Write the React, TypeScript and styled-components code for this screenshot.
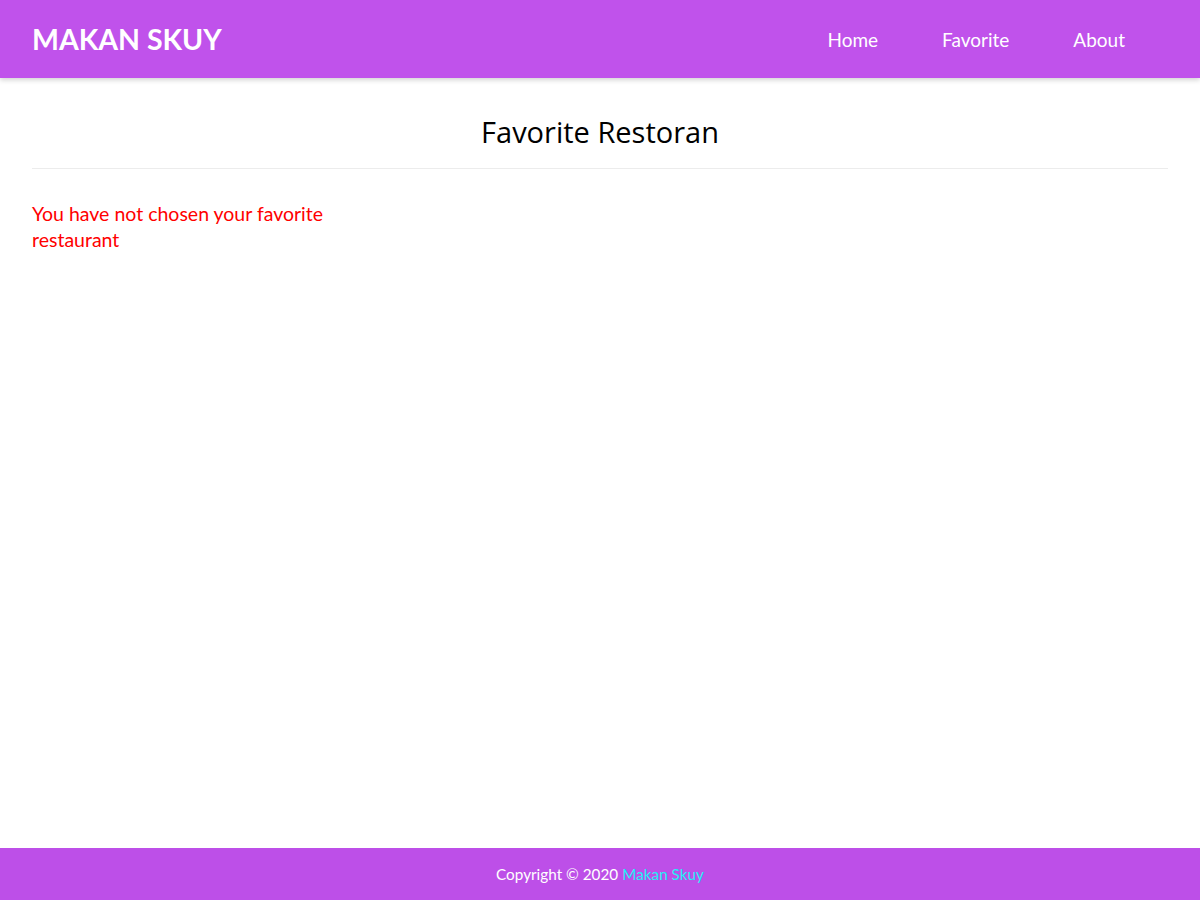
import React from "react";
import styled, { createGlobalStyle } from "styled-components";

const Global = createGlobalStyle`
  * { box-sizing: border-box; }
  html, body { margin: 0; padding: 0; }
  body { font-family: Lato, "Liberation Sans", sans-serif; background: #fff; color: #000; }
`;

const Page = styled.div`
  min-height: 900px;
  display: flex;
  flex-direction: column;
`;

const Header = styled.header`
  height: 78px;
  background: #c052eb;
  display: flex;
  align-items: center;
  justify-content: space-between;
  padding: 0 43px 0 32px;
  box-shadow: 0 2px 5px rgba(0, 0, 0, 0.18);
  position: relative;
  z-index: 1;
`;

const Logo = styled.a`
  color: #fff;
  font-family: Lato, sans-serif;
  font-weight: 700;
  font-size: 28.5px;
  text-decoration: none;
`;

const Nav = styled.nav`
  display: flex;
`;

const NavLink = styled.a`
  color: #fff;
  font-size: 19px;
  text-decoration: none;
  padding: 0 32px;
`;

const Main = styled.main`
  flex: 1;
  padding: 0 32px;
`;

const Title = styled.h2`
  margin: 0;
  padding: 34px 0 16px;
  text-align: center;
  font-family: "Open Sans", sans-serif;
  font-weight: 400;
  font-size: 29px;
  line-height: 40px;
  border-bottom: 1px solid #ececec;
`;

const Grid = styled.div`
  display: grid;
  grid-template-columns: repeat(3, 1fr);
  gap: 16px;
  padding-top: 32px;
`;

const Empty = styled.p`
  margin: 0;
  color: #ff0000;
  font-size: 19.5px;
  line-height: 26px;
`;

const Footer = styled.footer`
  height: 52px;
  background: #bd4fe8;
  display: flex;
  align-items: center;
  justify-content: center;
  color: #fff;
  font-size: 15.3px;
`;

const FooterLink = styled.a`
  color: #1ff0f5;
  text-decoration: none;
  margin-left: 4px;
`;

export default function App() {
  return (
    <>
      <Global />
      <Page>
        <Header>
          <Logo href="#">MAKAN SKUY</Logo>
          <Nav>
            <NavLink href="#">Home</NavLink>
            <NavLink href="#">Favorite</NavLink>
            <NavLink href="#">About</NavLink>
          </Nav>
        </Header>
        <Main>
          <Title>Favorite Restoran</Title>
          <Grid>
            <Empty>You have not chosen your favorite restaurant</Empty>
          </Grid>
        </Main>
        <Footer>
          Copyright © 2020<FooterLink href="#">Makan Skuy</FooterLink>
        </Footer>
      </Page>
    </>
  );
}
